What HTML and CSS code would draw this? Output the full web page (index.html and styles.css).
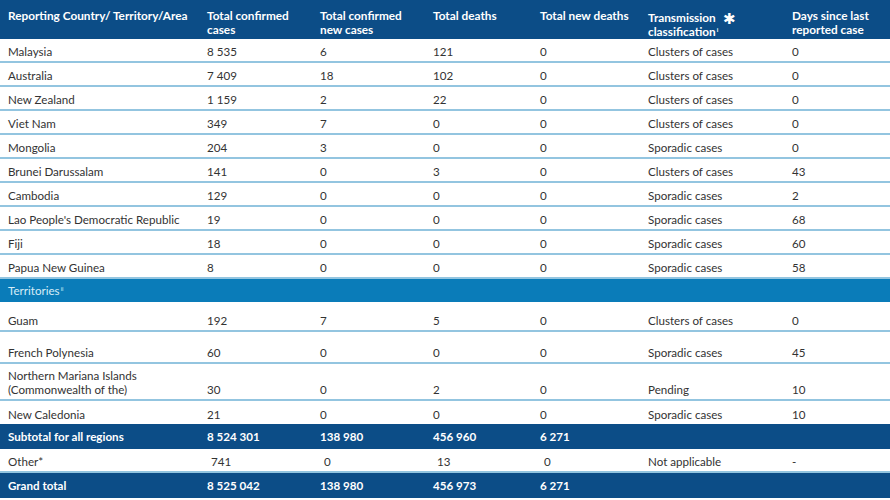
FILE: index.html
```html
<!DOCTYPE html>
<html lang="en">
<head>
<meta charset="utf-8">
<title>Western Pacific situation table</title>
<link rel="stylesheet" href="styles.css">
</head>
<body>
<div class="table">
  <div class="row head">
    <div class="c first">Reporting Country/ Territory/Area</div>
    <div class="c">Total confirmed<br>cases</div>
    <div class="c">Total confirmed<br>new cases</div>
    <div class="c">Total deaths</div>
    <div class="c">Total new deaths</div>
    <div class="c">Transmission <span class="star">&#10033;</span><br>classification<sup>i</sup></div>
    <div class="c">Days since last<br>reported case</div>
  </div>

  <div class="row data"><div class="c first">Malaysia</div><div class="c">8 535</div><div class="c">6</div><div class="c">121</div><div class="c">0</div><div class="c">Clusters of cases</div><div class="c">0</div></div>
  <div class="row data"><div class="c first">Australia</div><div class="c">7 409</div><div class="c">18</div><div class="c">102</div><div class="c">0</div><div class="c">Clusters of cases</div><div class="c">0</div></div>
  <div class="row data"><div class="c first">New Zealand</div><div class="c">1 159</div><div class="c">2</div><div class="c">22</div><div class="c">0</div><div class="c">Clusters of cases</div><div class="c">0</div></div>
  <div class="row data"><div class="c first">Viet Nam</div><div class="c">349</div><div class="c">7</div><div class="c">0</div><div class="c">0</div><div class="c">Clusters of cases</div><div class="c">0</div></div>
  <div class="row data"><div class="c first">Mongolia</div><div class="c">204</div><div class="c">3</div><div class="c">0</div><div class="c">0</div><div class="c">Sporadic cases</div><div class="c">0</div></div>
  <div class="row data"><div class="c first">Brunei Darussalam</div><div class="c">141</div><div class="c">0</div><div class="c">3</div><div class="c">0</div><div class="c">Clusters of cases</div><div class="c">43</div></div>
  <div class="row data"><div class="c first">Cambodia</div><div class="c">129</div><div class="c">0</div><div class="c">0</div><div class="c">0</div><div class="c">Sporadic cases</div><div class="c">2</div></div>
  <div class="row data"><div class="c first">Lao People's Democratic Republic</div><div class="c">19</div><div class="c">0</div><div class="c">0</div><div class="c">0</div><div class="c">Sporadic cases</div><div class="c">68</div></div>
  <div class="row data"><div class="c first">Fiji</div><div class="c">18</div><div class="c">0</div><div class="c">0</div><div class="c">0</div><div class="c">Sporadic cases</div><div class="c">60</div></div>
  <div class="row data"><div class="c first">Papua New Guinea</div><div class="c">8</div><div class="c">0</div><div class="c">0</div><div class="c">0</div><div class="c">Sporadic cases</div><div class="c">58</div></div>

  <div class="row band"><div class="c first">Territories<sup>ii</sup></div></div>

  <div class="row data tall"><div class="c first">Guam</div><div class="c">192</div><div class="c">7</div><div class="c">5</div><div class="c">0</div><div class="c">Clusters of cases</div><div class="c">0</div></div>
  <div class="row data taller"><div class="c first">French Polynesia</div><div class="c">60</div><div class="c">0</div><div class="c">0</div><div class="c">0</div><div class="c">Sporadic cases</div><div class="c">45</div></div>
  <div class="row data two"><div class="c first">Northern Mariana Islands<br>(Commonwealth of the)</div><div class="c">30</div><div class="c">0</div><div class="c">2</div><div class="c">0</div><div class="c">Pending</div><div class="c">10</div></div>
  <div class="row data last"><div class="c first">New Caledonia</div><div class="c">21</div><div class="c">0</div><div class="c">0</div><div class="c">0</div><div class="c">Sporadic cases</div><div class="c">10</div></div>

  <div class="row total"><div class="c first">Subtotal for all regions</div><div class="c">8 524 301</div><div class="c">138 980</div><div class="c">456 960</div><div class="c">6 271</div><div class="c"></div><div class="c"></div></div>
  <div class="row data other"><div class="c first">Other*</div><div class="c shift">741</div><div class="c shift">0</div><div class="c shift">13</div><div class="c shift">0</div><div class="c">Not applicable</div><div class="c">-</div></div>
  <div class="row total"><div class="c first">Grand total</div><div class="c">8 525 042</div><div class="c">138 980</div><div class="c">456 973</div><div class="c">6 271</div><div class="c"></div><div class="c"></div></div>
</div>
</body>
</html>
```

FILE: styles.css
```css
* { box-sizing: border-box; }
body {
  margin: 0;
  background: #ffffff;
  font-family: Lato, "Open Sans", sans-serif;
  font-size: 11.6px;
  line-height: 14px;
  color: #333333;
}
.table {
  width: 890px;
  display: flex;
  flex-direction: column;
}
.row {
  display: grid;
  grid-template-columns: 207px 113px 113px 107px 108px 144px 1fr;
}
.c { white-space: nowrap; }
.first { padding-left: 8px; }

.head {
  height: 39px;
  background: #0c4d87;
  color: #ffffff;
  font-weight: 700;
  font-size: 11.8px;
  align-items: start;
  padding-top: 9px;
}
.star {
  font-size: 15px;
  font-weight: 400;
  margin-left: 4px;
  position: relative;
  top: 2px;
}
sup {
  font-size: 6px;
  line-height: 0;
  vertical-align: 4px;
  margin-left: 1px;
}

.data {
  height: 24px;
  align-items: end;
  padding-bottom: 2px;
  border-bottom: 2px solid #93c5e0;
}
.data.tall { height: 30px; }
.data.taller { height: 32px; }
.data.two { height: 37px; }
.data.last { height: 23px; border-bottom: none; }
.shift { padding-left: 4px; }

.band {
  height: 23px;
  background: #0a7cb9;
  color: #d7ecf7;
  align-items: center;
  grid-template-columns: 1fr;
}

.total {
  height: 25px;
  background: #0c4d87;
  color: #ffffff;
  font-weight: 700;
  align-items: center;
}
```
